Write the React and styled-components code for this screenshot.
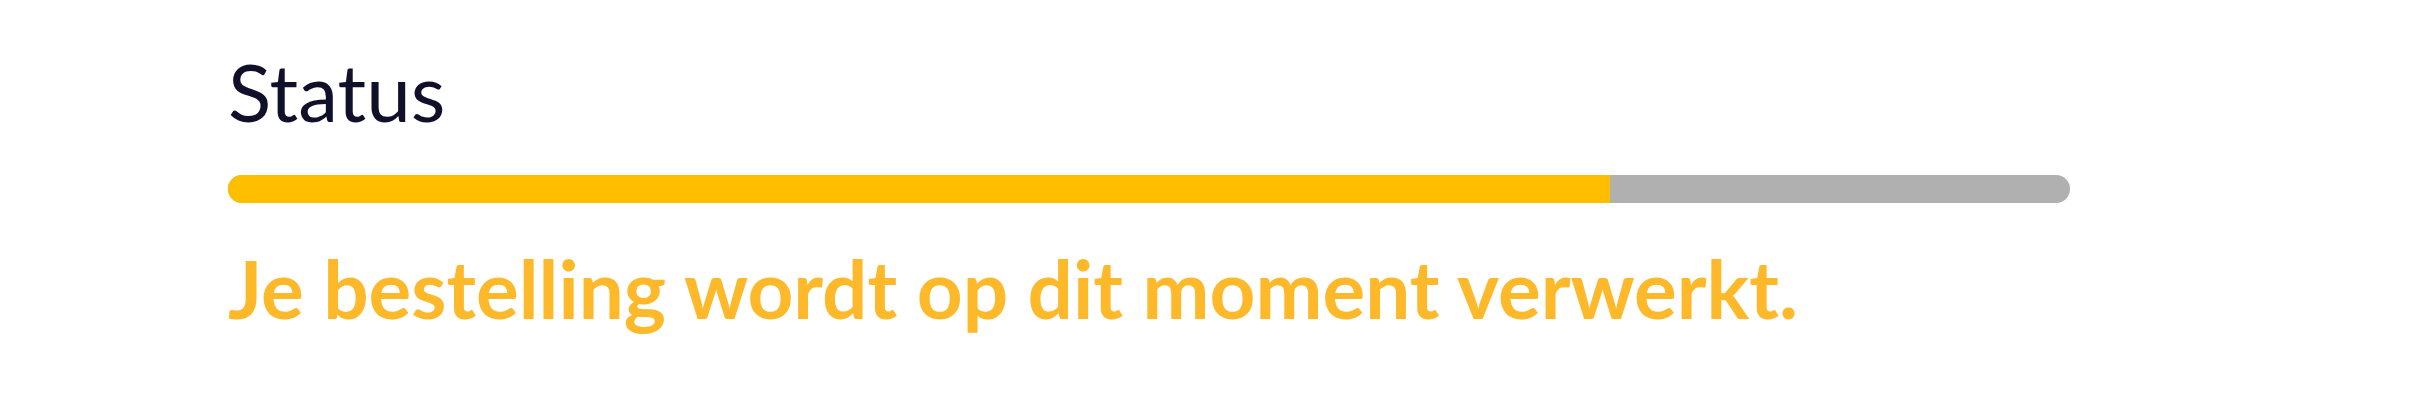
import React from 'react';
import styled, { createGlobalStyle } from 'styled-components';

const GlobalStyle = createGlobalStyle`
  body {
    margin: 0;
    background: #fff;
    font-family: Lato, "Open Sans", sans-serif;
  }
`;

const Wrapper = styled.section`
  padding: 43px 0 0 228px;
  width: 1842px;
`;

const Label = styled.h4`
  margin: 0;
  font-size: 80px;
  font-weight: 400;
  line-height: 96px;
  color: #10102a;
`;

const Track = styled.div`
  margin-top: 36px;
  height: 28px;
  border-radius: 14px;
  background-color: #b0b0b0;
  overflow: hidden;
`;

const Fill = styled.div`
  height: 100%;
  background-color: #ffbe00;
`;

const Message = styled.p`
  margin: 37px 0 0;
  font-size: 80px;
  font-weight: 700;
  line-height: 96px;
  color: #fdb92a;
`;

const progress = 75;

const App = () => {
  return (
    <>
      <GlobalStyle />
      <Wrapper>
        <Label>Status</Label>
        <Track>
          <Fill style={{ width: `${progress}%` }} />
        </Track>
        <Message>Je bestelling wordt op dit moment verwerkt.</Message>
      </Wrapper>
    </>
  );
};

export default App;
